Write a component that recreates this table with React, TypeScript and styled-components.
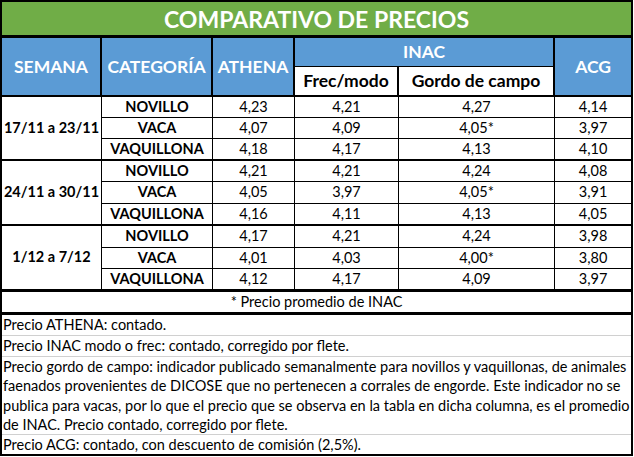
import React from "react";
import styled, { createGlobalStyle } from "styled-components";

const GlobalStyle = createGlobalStyle`
  html, body { margin: 0; padding: 0; background: #ffffff; }
  body { font-family: Lato, "Open Sans", Arial, sans-serif; color: #000; }
  * { box-sizing: border-box; }
`;

const Sheet = styled.table`
  width: 633px;
  table-layout: fixed;
  border-collapse: separate;
  border-spacing: 0;
  border: 2px solid #000;
  font-family: Lato, "Open Sans", Arial, sans-serif;
`;

const Col = styled.col<{ $w: number }>`
  width: ${(p) => p.$w}px;
`;

const Row = styled.tr<{ $h: number }>`
  height: ${(p) => p.$h}px;
`;

const TitleCell = styled.th`
  padding: 0;
  background: #70ad47;
  color: #ffffff;
  font-size: 23px;
  font-weight: 700;
  text-align: center;
  vertical-align: middle;
  border-bottom: 3px solid #000;
  white-space: nowrap;
`;

const HeadCell = styled.th<{ $last?: boolean; $bottom?: number; $light?: boolean }>`
  padding: 0;
  background: ${(p) => (p.$light ? "#ffffff" : "#5b9bd5")};
  color: ${(p) => (p.$light ? "#000000" : "#ffffff")};
  font-size: 17.5px;
  font-weight: 700;
  line-height: 1;
  text-align: center;
  vertical-align: middle;
  border-right: ${(p) => (p.$last ? "0" : "2px solid #000")};
  border-bottom: ${(p) => p.$bottom ?? 2}px solid #000;
  white-space: nowrap;
`;

const BodyCell = styled.td<{ $last?: boolean; $bottom: number }>`
  padding: 0;
  font-size: 14.5px;
  line-height: 1;
  text-align: center;
  vertical-align: middle;
  border-right: ${(p) => (p.$last ? "0" : "1px solid #000")};
  border-bottom: ${(p) => p.$bottom}px solid #000;
  white-space: nowrap;
`;

const WeekCell = styled(BodyCell)`
  font-weight: 700;
`;

const CatCell = styled(BodyCell)`
  font-weight: 700;
`;

const NumCell = styled(BodyCell)`
  font-weight: 400;
`;

const FootCell = styled.td`
  padding: 0;
  font-size: 14.5px;
  line-height: 1;
  text-align: center;
  vertical-align: middle;
  border-bottom: 3px solid #000;
  white-space: nowrap;
`;

const NoteCell = styled.td<{ $last?: boolean }>`
  padding: 0 0 0 1px;
  font-size: 14.5px;
  line-height: 19.3px;
  text-align: left;
  vertical-align: middle;
  border-bottom: ${(p) => (p.$last ? "0" : "1px solid #d0d0d0")};
  white-space: nowrap;
`;

const NoteLine = styled.div`
  display: block;
`;

type Block = { week: string; rows: string[][]; heights: number[] };

const blocks: Block[] = [
  {
    week: "17/11 a 23/11",
    rows: [
      ["NOVILLO", "4,23", "4,21", "4,27", "4,14"],
      ["VACA", "4,07", "4,09", "4,05*", "3,97"],
      ["VAQUILLONA", "4,18", "4,17", "4,13", "4,10"],
    ],
    heights: [21, 21, 22],
  },
  {
    week: "24/11 a 30/11",
    rows: [
      ["NOVILLO", "4,21", "4,21", "4,24", "4,08"],
      ["VACA", "4,05", "3,97", "4,05*", "3,91"],
      ["VAQUILLONA", "4,16", "4,11", "4,13", "4,05"],
    ],
    heights: [21, 22, 22],
  },
  {
    week: "1/12 a 7/12",
    rows: [
      ["NOVILLO", "4,17", "4,21", "4,24", "3,98"],
      ["VACA", "4,01", "4,03", "4,00*", "3,80"],
      ["VAQUILLONA", "4,12", "4,17", "4,09", "3,97"],
    ],
    heights: [22, 21, 23],
  },
];

const gordoLines = [
  "Precio gordo de campo: indicador publicado semanalmente para novillos y vaquillonas, de animales",
  "faenados provenientes de DICOSE que no pertenecen a corrales de engorde. Este indicador no se",
  "publica para vacas, por lo que el precio que se observa en la tabla en dicha columna, es el promedio",
  "de INAC. Precio contado, corregido por flete.",
];

export default function App() {
  return (
    <>
      <GlobalStyle />
      <Sheet>
        <colgroup>
          <Col $w={100} />
          <Col $w={111} />
          <Col $w={82} />
          <Col $w={104} />
          <Col $w={156} />
          <Col $w={76} />
        </colgroup>
        <thead>
          <Row $h={36}>
            <TitleCell colSpan={6}>COMPARATIVO DE PRECIOS</TitleCell>
          </Row>
          <Row $h={29}>
            <HeadCell rowSpan={2}>SEMANA</HeadCell>
            <HeadCell rowSpan={2}>CATEGORÍA</HeadCell>
            <HeadCell rowSpan={2}>ATHENA</HeadCell>
            <HeadCell colSpan={2} $bottom={1}>
              INAC
            </HeadCell>
            <HeadCell rowSpan={2} $last>
              ACG
            </HeadCell>
          </Row>
          <Row $h={30}>
            <HeadCell $light>Frec/modo</HeadCell>
            <HeadCell $light>Gordo de campo</HeadCell>
          </Row>
        </thead>
        <tbody>
          {blocks.map((b, bi) => {
            const endBorder = bi === blocks.length - 1 ? 3 : 2;
            return b.rows.map((r, ri) => {
              const bottom = ri === 2 ? endBorder : 1;
              return (
                <Row key={`${bi}-${ri}`} $h={b.heights[ri]}>
                  {ri === 0 && (
                    <WeekCell rowSpan={3} $bottom={endBorder}>
                      {b.week}
                    </WeekCell>
                  )}
                  <CatCell $bottom={bottom}>{r[0]}</CatCell>
                  <NumCell $bottom={bottom}>{r[1]}</NumCell>
                  <NumCell $bottom={bottom}>{r[2]}</NumCell>
                  <NumCell $bottom={bottom}>{r[3]}</NumCell>
                  <NumCell $bottom={bottom} $last>
                    {r[4]}
                  </NumCell>
                </Row>
              );
            });
          })}
          <Row $h={23}>
            <FootCell colSpan={6}>* Precio promedio de INAC</FootCell>
          </Row>
          <Row $h={21}>
            <NoteCell colSpan={6}>Precio ATHENA: contado.</NoteCell>
          </Row>
          <Row $h={21}>
            <NoteCell colSpan={6}>Precio INAC modo o frec: contado, corregido por flete.</NoteCell>
          </Row>
          <Row $h={78}>
            <NoteCell colSpan={6}>
              {gordoLines.map((l) => (
                <NoteLine key={l}>{l}</NoteLine>
              ))}
            </NoteCell>
          </Row>
          <Row $h={19}>
            <NoteCell colSpan={6} $last>
              Precio ACG: contado, con descuento de comisión (2,5%).
            </NoteCell>
          </Row>
        </tbody>
      </Sheet>
    </>
  );
}
